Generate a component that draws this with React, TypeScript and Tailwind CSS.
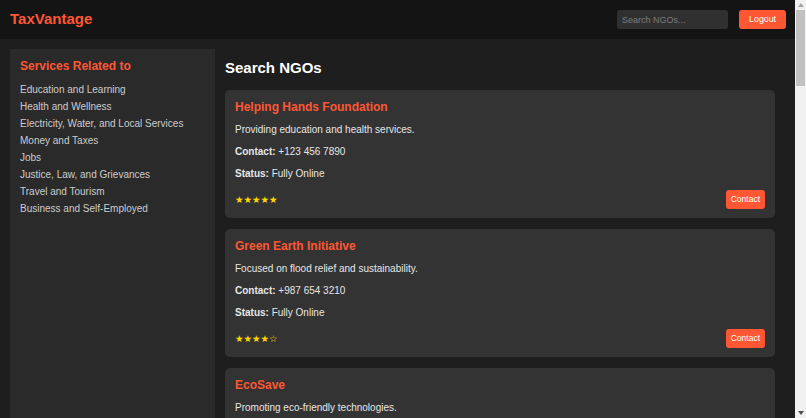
import React from "react";

type Ngo = {
  name: string;
  desc: string;
  contact: string;
  status: string;
  rating: number;
};

const ngos: Ngo[] = [
  { name: "Helping Hands Foundation", desc: "Providing education and health services.", contact: "+123 456 7890", status: "Fully Online", rating: 5 },
  { name: "Green Earth Initiative", desc: "Focused on flood relief and sustainability.", contact: "+987 654 3210", status: "Fully Online", rating: 4 },
  { name: "EcoSave", desc: "Promoting eco-friendly technologies.", contact: "+456 789 1230", status: "Partially Online", rating: 4 },
  { name: "Care for All", desc: "Supporting elderly and disabled citizens.", contact: "+321 654 9870", status: "Fully Online", rating: 5 },
];

const services = [
  "Education and Learning",
  "Health and Wellness",
  "Electricity, Water, and Local Services",
  "Money and Taxes",
  "Jobs",
  "Justice, Law, and Grievances",
  "Travel and Tourism",
  "Business and Self-Employed",
];

function Stars({ n }: { n: number }) {
  return (
    <span className="text-[9.5px] leading-[12px] text-[#ffd700] font-['DejaVu_Sans',sans-serif]">
      {"★".repeat(n) + "☆".repeat(5 - n)}
    </span>
  );
}

function Card({ ngo }: { ngo: Ngo }) {
  return (
    <div className="bg-[#333333] rounded-[5px] px-[10px] pt-[10px] pb-[9px] mb-[11px] shrink-0">
      <h3 className="text-[12px] leading-[14px] font-bold text-[#ff5733]">{ngo.name}</h3>
      <p className="mt-[10px] text-[10px] leading-[12px] text-[#e6e6e6]">{ngo.desc}</p>
      <p className="mt-[10px] text-[10px] leading-[12px] text-[#e6e6e6]">
        <span className="font-bold">Contact:</span> {ngo.contact}
      </p>
      <p className="mt-[10px] text-[10px] leading-[12px] text-[#e6e6e6]">
        <span className="font-bold">Status:</span> {ngo.status}
      </p>
      <div className="mt-[10px] flex items-center justify-between">
        <Stars n={ngo.rating} />
        <button className="bg-[#ff5733] text-white text-[8.5px] leading-[9px] px-[5px] py-[5px] rounded-[3px]">
          Contact
        </button>
      </div>
    </div>
  );
}

function Scrollbar() {
  return (
    <div className="w-[11px] shrink-0 bg-[#f1f1f1] flex flex-col">
      <div className="h-[10px] flex items-center justify-center">
        <svg width="6" height="4" viewBox="0 0 6 4">
          <polygon points="3,0 6,4 0,4" fill="#a3a3a3" />
        </svg>
      </div>
      <div className="h-[76px] mx-[1px] bg-[#c1c1c1]" />
      <div className="flex-1" />
      <div className="h-[10px] flex items-center justify-center">
        <svg width="6" height="4" viewBox="0 0 6 4">
          <polygon points="0,0 6,0 3,4" fill="#505050" />
        </svg>
      </div>
    </div>
  );
}

export default function App() {
  return (
    <div className="flex h-screen font-['Liberation_Sans',Arial,sans-serif]">
      <div className="flex-1 min-w-0 flex flex-col overflow-hidden bg-[#1e1e1e]">
        <header className="h-[39px] shrink-0 bg-[#141414] flex items-center justify-between pl-[10px] pr-[9px]">
          <div className="text-[15px] font-bold text-[#ff5733]">TaxVantage</div>
          <div className="flex items-center gap-[11px]">
            <input
              placeholder="Search NGOs..."
              className="w-[111px] h-[19px] bg-[#303030] rounded-[3px] px-[5px] text-[9px] text-[#ddd] placeholder:text-[#7c7c7c] outline-none"
            />
            <button className="h-[19px] bg-[#ff5733] text-white text-[8.8px] px-[10px] rounded-[3px]">Logout</button>
          </div>
        </header>
        <div className="flex-1 flex px-[10px] pt-[10px] min-h-0">
          <aside className="w-[205px] shrink-0 bg-[#2a2a2a] p-[10px]">
            <h3 className="text-[12px] leading-[14px] font-bold text-[#ff5733] mb-[8px]">Services Related to</h3>
            <ul>
              {services.map((s) => (
                <li key={s} className="text-[10px] leading-[17px] text-[#cccccc]">{s}</li>
              ))}
            </ul>
          </aside>
          <main className="flex-1 p-[10px] flex flex-col">
            <h2 className="text-[15px] leading-[17px] font-bold text-white mb-[14px]">Search NGOs</h2>
            {ngos.map((n) => (
              <Card key={n.name} ngo={n} />
            ))}
          </main>
        </div>
      </div>
      <Scrollbar />
    </div>
  );
}
